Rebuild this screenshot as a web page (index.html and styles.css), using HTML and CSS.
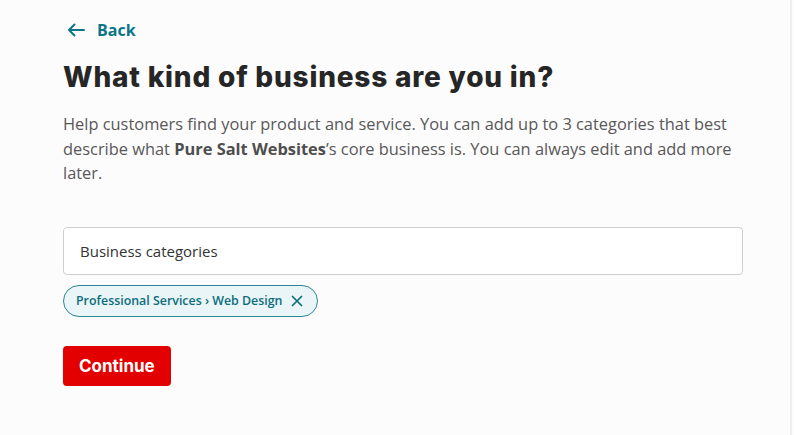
FILE: index.html
```html
<!DOCTYPE html>
<html lang="en">
<head>
<meta charset="utf-8">
<title>What kind of business are you in?</title>
<link rel="stylesheet" href="styles.css">
</head>
<body>
<div class="page">
  <main class="content">
    <a class="back" href="#">
      <svg class="back-icon" width="18" height="14" viewBox="0 0 18 14" aria-hidden="true">
        <path d="M17 7H2M7.5 1.5L2 7l5.5 5.5" fill="none" stroke="currentColor" stroke-width="2" stroke-linecap="round" stroke-linejoin="round"/>
      </svg>
      <span>Back</span>
    </a>
    <h1 class="title">What kind of business are you in?</h1>
    <p class="intro">Help customers find your product and service. You can add up to 3 categories that best describe what <strong>Pure Salt Websites</strong>’s core business is. You can always edit and add more later.</p>
    <div class="field">
      <input class="field-input" type="text" placeholder="Business categories">
    </div>
    <div class="chips">
      <span class="chip">Professional Services › Web Design
        <svg class="chip-x" width="12" height="12" viewBox="0 0 12 12" aria-hidden="true">
          <path d="M1.5 1.5l9 9M10.5 1.5l-9 9" stroke="currentColor" stroke-width="1.7" stroke-linecap="round"/>
        </svg>
      </span>
    </div>
    <button class="btn-primary" type="button">Continue</button>
  </main>
</div>
</body>
</html>
```
FILE: styles.css
```css
html, body {
  margin: 0;
  padding: 0;
}
body {
  background: #fdfcfd;
  font-family: "Open Sans", "DejaVu Sans", sans-serif;
  color: #333;
}
.page {
  min-height: 435px;
  width: 792px;
  border-right: 2px solid #efeeef;
  box-sizing: border-box;
}
.content {
  width: 680px;
  padding: 18px 0 0 63px;
  display: flex;
  flex-direction: column;
  align-items: flex-start;
}
.back {
  display: flex;
  align-items: center;
  gap: 12px;
  color: #0b7587;
  text-decoration: none;
  font-weight: 700;
  font-size: 16px;
  line-height: 24px;
  padding-left: 4px;
}
.back-icon {
  display: block;
}
.title {
  margin: 17px 0 0;
  font-family: "Inter", sans-serif;
  font-weight: 800;
  font-size: 28px;
  line-height: 36px;
  letter-spacing: 0.8px;
  color: #262626;
}
.intro {
  margin: 17px 0 0;
  font-size: 16.4px;
  line-height: 24.5px;
  color: #585858;
}
.intro strong {
  font-weight: 700;
  color: #4e4e4e;
}
.field {
  margin-top: 41px;
  width: 680px;
}
.field-input {
  width: 100%;
  height: 48px;
  box-sizing: border-box;
  border: 1px solid #cfcfcf;
  border-radius: 4px;
  background: #fff;
  padding: 0 16px;
  font-family: "Open Sans", sans-serif;
  font-size: 15px;
  color: #333;
  outline: none;
}
.field-input::placeholder {
  color: #333;
  opacity: 1;
}
.chips {
  margin-top: 10px;
  display: flex;
  gap: 8px;
}
.chip {
  display: inline-flex;
  align-items: center;
  gap: 9px;
  height: 32px;
  box-sizing: border-box;
  padding: 0 14px 0 12px;
  border: 1px solid #2b8795;
  border-radius: 16px;
  background: #e9f5f7;
  color: #0d6d7c;
  font-size: 12.4px;
  font-weight: 600;
}
.chip-x {
  display: block;
}
.btn-primary {
  margin-top: 29px;
  height: 40px;
  padding: 0 16px;
  border: none;
  border-radius: 4px;
  background: #e20000;
  color: #fff;
  font-family: "Inter", sans-serif;
  font-weight: 700;
  font-size: 17px;
  cursor: pointer;
}
```
